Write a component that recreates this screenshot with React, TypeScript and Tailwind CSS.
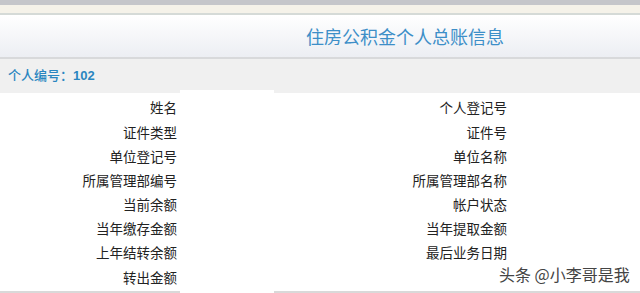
export default function App() {
  const left = ["姓名", "证件类型", "单位登记号", "所属管理部编号", "当前余额", "当年缴存金额", "上年结转余额", "转出金额"];
  const right = ["个人登记号", "证件号", "单位名称", "所属管理部名称", "帐户状态", "当年提取金额", "最后业务日期", ""];
  const cjk = { fontFamily: '"Noto Sans CJK SC", "Noto Sans", sans-serif' };
  return (
    <div className="relative w-[640px] h-[293px] overflow-hidden bg-white flex flex-col" style={cjk}>
      <div className="h-[5px] bg-[#c5c6ca]" />
      <div className="h-[8px] bg-[#f5f2e9]" />
      <div className="h-[2px] bg-[#d5dad7]" />
      <div className="h-[42px] bg-gradient-to-b from-[#ffffff] to-[#eceef3] flex items-center">
        <div className="pl-[306px] text-[18px] leading-none text-[#3d8fc8] whitespace-nowrap">住房公积金个人总账信息</div>
      </div>
      <div className="h-[2px] bg-[#d8d9db]" />
      <div className="h-[31px] bg-[#f0f0f0] flex items-center">
        <div className="pl-[8px] text-[13px] leading-none text-[#2a86c0] font-medium whitespace-nowrap">
          个人编号：<span className="font-bold" style={{ fontFamily: '"Liberation Sans", sans-serif' }}>102</span>
        </div>
      </div>
      <div className="h-[3px] flex">
        <div className="w-[180px] bg-[#f0f0f0]" />
        <div className="w-[94px] bg-white" />
        <div className="flex-1 bg-[#f0f0f0]" />
      </div>
      <div className="h-[3px]" />
      <div className="flex flex-col">
        {left.map((l, i) => (
          <div key={i} className="h-[24.2px] flex items-center text-[13.5px] leading-none text-[#222]">
            <div className="w-[177px] text-right whitespace-nowrap">{l}</div>
            <div className="w-[153px]" />
            <div className="w-[177px] text-right whitespace-nowrap">{right[i]}</div>
          </div>
        ))}
      </div>
      <div className="flex-1" />
      <div className="h-[2px] flex">
        <div className="w-[180px] bg-[#d9d9d9]" />
        <div className="w-[94px] bg-white" />
        <div className="flex-1 bg-[#d9d9d9]" />
      </div>
      <div
        className="absolute left-[499px] top-[266px] text-[16px] leading-none text-[#444] whitespace-nowrap"
        style={{ textShadow: "0 0 2px #fff, 0 0 2px #fff" }}
      >
        头条 @小李哥是我
      </div>
    </div>
  );
}
